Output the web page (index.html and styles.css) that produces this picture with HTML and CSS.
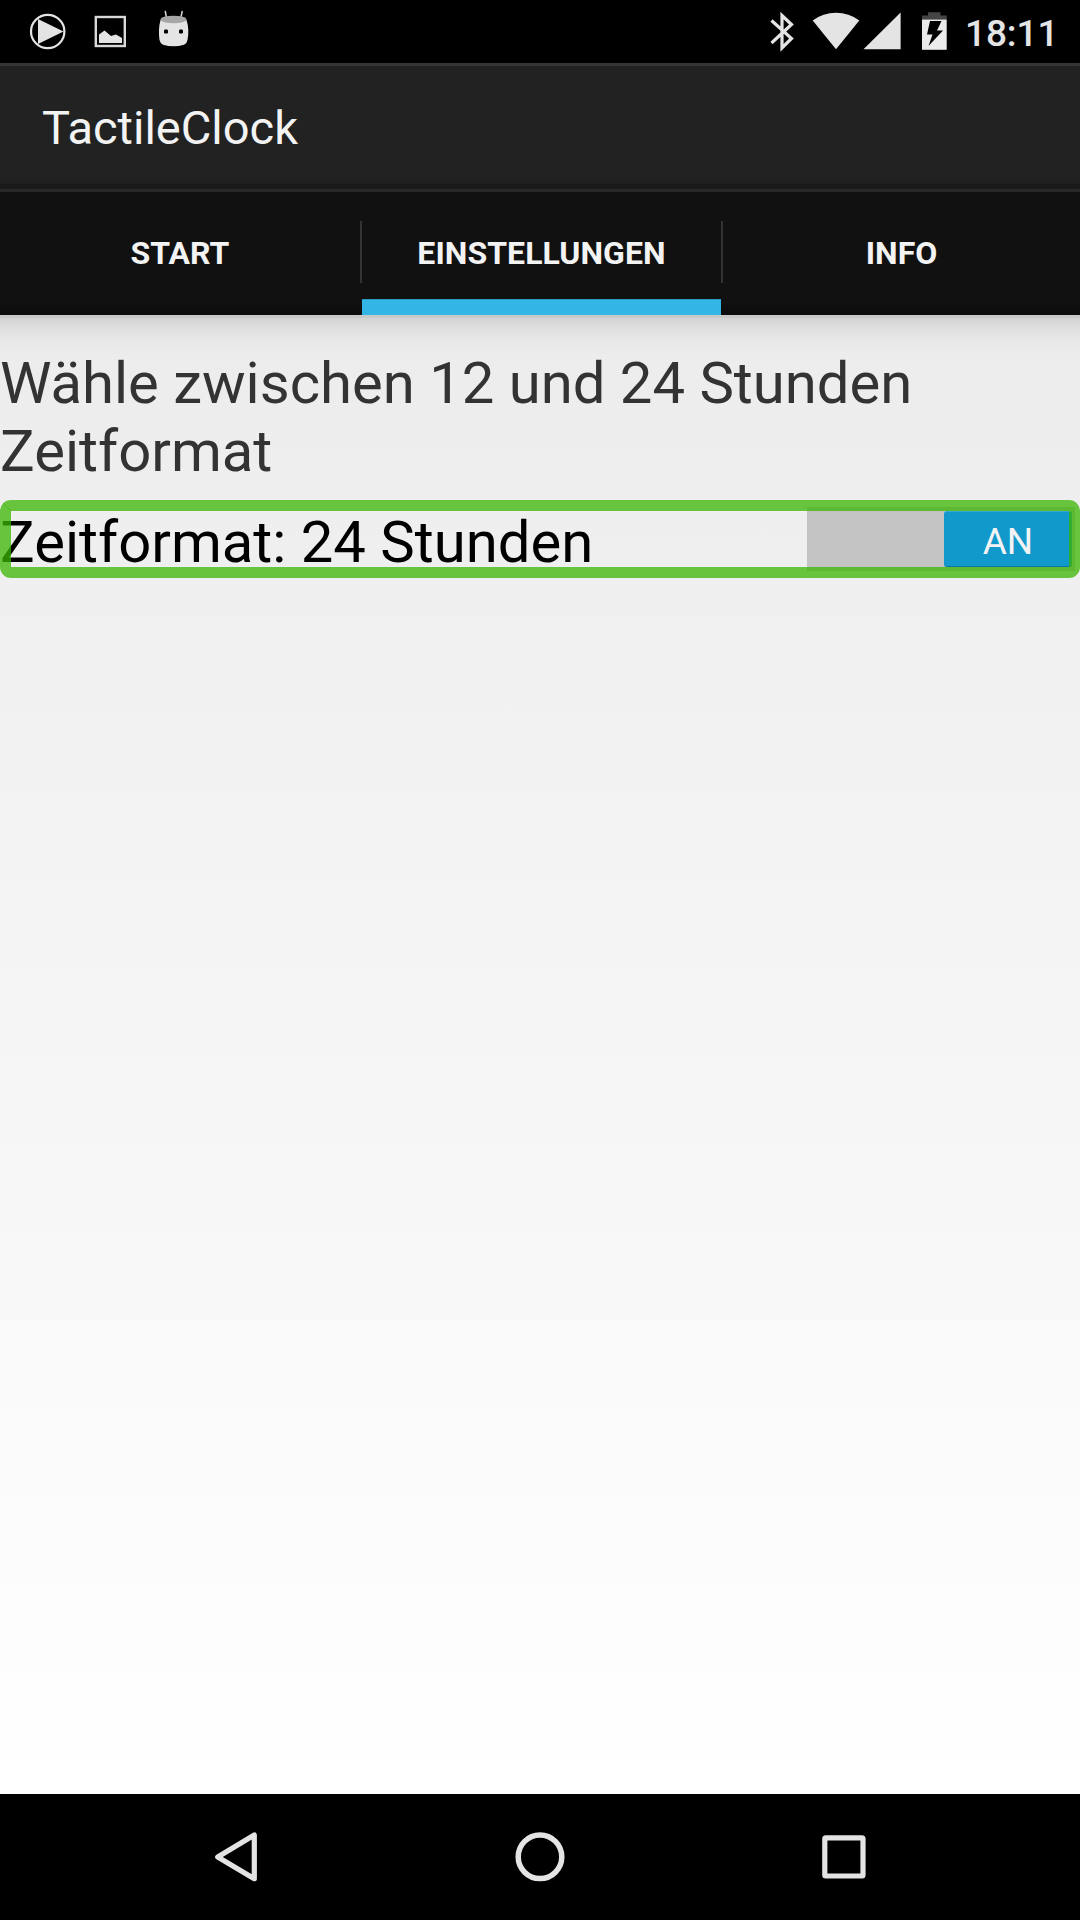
FILE: index.html
```html
<!DOCTYPE html>
<html lang="de">
<head>
<meta charset="utf-8">
<title>TactileClock</title>
<link rel="stylesheet" href="styles.css">
</head>
<body>
<div class="screen">
  <div class="status-bar">
    <svg class="status-icons" width="220" height="63" viewBox="0 0 220 63">
      <circle cx="47.7" cy="31.5" r="16.7" fill="none" stroke="#e4e4e4" stroke-width="2.2"/>
      <path d="M38 19v25l25.5-12.5z" fill="#e4e4e4"/>
      <rect x="95.8" y="17" width="29" height="29" fill="none" stroke="#d8d8d8" stroke-width="2.4"/>
      <path d="M99 43v-8.500l5.500-4 6.500 5.500 5-1.500 6 3.500v5z" fill="#e4e4e4"/>
      <path d="M165.300 11.500l1.500 8M182.200 11.500l-1.800 8" stroke="#d8d8d8" stroke-width="1.500" stroke-linecap="round"/>
      <path d="M160.500 20Q158 29 159.500 40Q160.200 43.500 163 44.800Q173.500 47.800 184 44.800Q187 43.500 187.500 40Q189.500 29 186.500 20z" fill="#e4e4e4"/>
      <ellipse cx="173.500" cy="19.500" rx="13" ry="3.800" fill="#a6a6a6"/>
      <rect x="164" y="29.500" width="4" height="4" rx="1.200"/>
      <rect x="179" y="29.500" width="4" height="4" rx="1.200"/>
    </svg>
    <svg class="status-icons" width="200" height="63" viewBox="750 0 200 63">
      <path d="M771.500 20.500l20 18-9.500 9.500V15.500l9.500 9-20 18.500" fill="none" stroke="#e4e4e4" stroke-width="3.200"/>
      <path d="M812.700 20.500Q823 12.800 836 12.800T859.300 20.500L836 49.300z" fill="#e4e4e4"/>
      <path d="M863.500 49.300L900.600 12.500v36.800z" fill="#e4e4e4"/>
      <path d="M922 19.500v-4h6v-3.200h12.500v3.200h6.200v4z" fill="#454545"/>
      <path d="M922 19.500h24.700v30.300H922z" fill="#ebebeb"/>
      <path d="M930 21h11.500l-4.500 9.500h6L928.500 46l4-11.500h-5.500z"/>
    </svg>
    <span class="clock">18:11</span>
  </div>
  <header class="action-bar"><h1>TactileClock</h1></header>
  <nav class="tabs">
    <span class="tab"><b>START</b></span>
    <i class="divider"></i>
    <span class="tab active"><b>EINSTELLUNGEN</b></span>
    <i class="divider"></i>
    <span class="tab"><b>INFO</b></span>
  </nav>
  <main class="content">
    <p class="hint">Wähle zwischen 12 und 24 Stunden Zeitformat</p>
    <div class="setting">
      <span class="label">Zeitformat: 24 Stunden</span>
      <span class="switch"><span class="thumb">AN</span></span>
      <svg class="focus" width="1080" height="78" viewBox="0 0 1080 78">
        <rect x="5.500" y="5.500" width="1069" height="67" rx="5.500" fill="none" stroke="#39b500" stroke-opacity=".75" stroke-width="11"/>
        <path d="M3 3l8 8" stroke="#39b500" stroke-opacity=".75" stroke-width=".8"/>
      </svg>
    </div>
  </main>
  <footer class="nav-bar">
    <svg width="1080" height="126" viewBox="0 1794 1080 126" fill="none" stroke="#e4e4e4" stroke-width="5.200" stroke-linejoin="round">
      <path d="M254.300 1835v43.700L217.700 1857z"/>
      <circle cx="540" cy="1856.800" r="21.800" stroke-width="5.500"/>
      <rect x="824.800" y="1837.800" width="38.200" height="38.200" rx="1"/>
    </svg>
  </footer>
</div>
</body>
</html>
```
FILE: styles.css
```css
* { box-sizing: border-box; }
body { margin: 0; font-family: Roboto, sans-serif; }
.screen {
  width: 1080px;
  height: 1920px;
  display: flex;
  flex-direction: column;
  overflow: hidden;
  background: linear-gradient(#e8e8e8, #fff 1794px);
}
.status-bar {
  height: 63px;
  display: flex;
  background: #000;
}
.status-icons + .status-icons { margin-left: 530px; }
.clock {
  margin-left: 15px;
  font-size: 37px;
  font-weight: 500;
  letter-spacing: -.1px;
  line-height: 67px;
  color: #e4e4e4;
}
.action-bar {
  height: 126px;
  padding-left: 42px;
  border-top: 3px solid #363636;
  background: linear-gradient(#222 0 108px, #1f1f1f 118px, #1a1a1a 118px);
}
.action-bar h1 {
  margin: 0;
  font-size: 47px;
  font-weight: 400;
  line-height: 123px;
  color: #f3f3f3;
}
.tabs {
  height: 126px;
  display: flex;
  border-top: 3px solid #292929;
  background: linear-gradient(#111 0 109px, #0b0b0b);
}
.tab {
  flex: 0 0 360px;
  text-align: center;
  font-size: 32px;
  line-height: 122px;
  color: #f3f3f3;
}
.tab.active {
  flex-basis: 359px;
  letter-spacing: .05px;
  background: linear-gradient(#299bc4, #299bc4) 0 107px / 100% 1px no-repeat,
    linear-gradient(#33b5e5, #33b5e5) 0 108px / 100% 15px no-repeat;
}
.tab:last-child { flex: 1; }
.divider {
  width: 2px;
  height: 62px;
  margin-top: 29px;
  background: #343434;
}
.content {
  flex: 1;
  padding-top: 34px;
  background: linear-gradient(rgba(0,0,0,.15) 0 3px, rgba(0,0,0,.11) 3px, rgba(0,0,0,.055) 13px, rgba(0,0,0,.018) 26px, transparent 42px);
}
.hint {
  margin: 0;
  font-size: 58px;
  line-height: 68px;
  color: #333;
}
.setting {
  position: relative;
  height: 78px;
  margin-top: 15px;
  display: flex;
  justify-content: space-between;
}
.label {
  font-size: 58px;
  line-height: 84px;
  color: #000;
}
.switch {
  width: 268px;
  height: 64px;
  margin: 7px 5px 0 0;
  padding: 4px 3px 4px 137px;
  background: #c3c3c3;
}
.thumb {
  display: block;
  height: 56px;
  border-radius: 3px;
  border-top: 1px solid #32a9d5;
  border-bottom: 1.500px solid #0a77a3;
  background: #1299cc;
  color: #f3f3f3;
  font-size: 37px;
  line-height: 59px;
  text-align: center;
}
.focus { position: absolute; left: 0; top: 0; }
.nav-bar { height: 126px; background: #000; }
.nav-bar svg { display: block; }
```
